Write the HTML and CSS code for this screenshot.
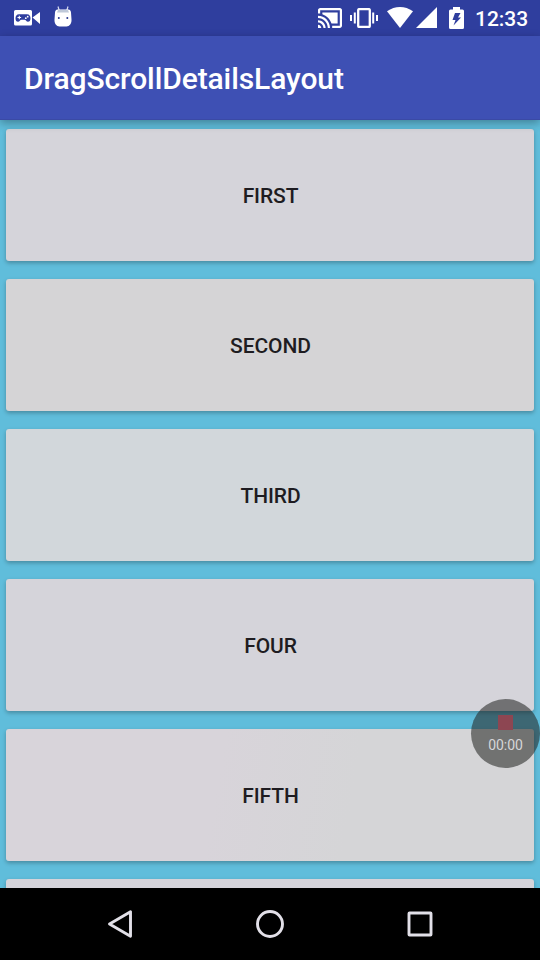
FILE: index.html
```html
<!DOCTYPE html>
<html lang="en">
<head>
<meta charset="utf-8">
<title>DragScrollDetailsLayout</title>
<link rel="stylesheet" href="styles.css">
</head>
<body>
<div class="screen">
  <header class="status">
    <div class="status-left">
      <svg class="icon-camera" width="26" height="16" viewBox="0 0 26 16">
        <path fill="#fff" d="M1.500 0H16.500a1.500 1.500 0 0 1 1.500 1.500V14a1.500 1.500 0 0 1-1.500 1.500H1.500A1.500 1.500 0 0 1 0 14V1.500A1.500 1.500 0 0 1 1.500 0ZM18.500 7.500L26 2V14Z"/>
        <path fill="#2f3e9e" d="M5 4.300h8c2.300 0 3.500 1.700 3.500 4 0 2.500-1 3.500-2.500 3.500-1.700 0-2-2-3.500-2h-3c-1.500 0-1.800 2-3.500 2-1.500 0-2.500-1-2.500-3.500 0-2.300 1.200-4 3.500-4Z"/>
        <path stroke="#fff" stroke-width="1.100" d="M3.500 7.500h3.600M5.300 5.700v3.600"/>
        <circle cx="11.800" cy="8.200" r=".9" fill="#fff"/><circle cx="13.700" cy="6.700" r=".9" fill="#fff"/>
      </svg>
      <svg class="icon-droid" width="18" height="21" viewBox="0 0 18 21">
        <path stroke="#d8dcf0" stroke-width="1.200" d="M4 .5l1.200 4M14 .5l-1.200 4"/>
        <path fill="#fff" d="M3.500 3.500h11c1.500 0 2.500 1.500 2.500 3l.5 7c.3 4-2 7-5 7h-7c-3 0-5.300-3-5-7l.5-7c0-1.500 1-3 2.500-3Z"/>
        <path fill="#bfc9d9" d="M4 4h10l1 2.500H3Z"/>
        <circle cx="4.800" cy="12" r="1" fill="#26358c"/><circle cx="13.300" cy="12" r="1" fill="#26358c"/>
      </svg>
      
    </div>
    <div class="status-right">
      <svg class="icon-cast" width="24" height="20" viewBox="1 3 22 18" preserveAspectRatio="none">
        <path fill="#fff" d="M1 18v3h3c0-1.660-1.340-3-3-3zm0-4v2c2.760 0 5 2.240 5 5h2c0-3.870-3.130-7-7-7zm18-7H5v1.630c3.960 1.280 7.090 4.410 8.370 8.370H19V7zM1 10v2c4.970 0 9 4.030 9 9h2c0-6.080-4.930-11-11-11zm20-7H3c-1.100 0-2 .9-2 2v3h2V5h18v14h-7v2h7c1.100 0 2-.9 2-2V5c0-1.100-.9-2-2-2z"/>
      </svg>
      <svg class="icon-vibrate" width="28" height="20" viewBox="0 0 28 20" fill="none" stroke="#fff" stroke-width="2">
        <rect x="8.200" y="1.100" width="11.600" height="17.800" rx="1" stroke-width="2.300"/>
        <path d="M1 7v6M4.800 4.500v11M27 7v6M23.200 4.500v11"/>
      </svg>
      <svg class="icon-wifi" width="26" height="21" viewBox="0 0 26 21"><path fill="#fff" d="M0 4.300C8 -1.400 18 -1.400 26 4.300L13 21Z"/></svg>
      <svg class="icon-signal" width="21" height="21" viewBox="0 0 21 21"><path fill="#fff" d="M21 0V21H0Z"/></svg>
      <svg class="icon-battery" width="15" height="22" viewBox="0 0 15 22">
        <path fill="#fff" d="M4 0h7v2.500h2.500A1.500 1.500 0 0 1 15 4v16.500a1.500 1.500 0 0 1-1.500 1.500h-12A1.500 1.500 0 0 1 0 20.500V4a1.500 1.500 0 0 1 1.500-1.500H4Z"/>
        <path fill="#2f3e9e" d="M6 6h5.500L9 10.500H12L4.500 18.500L6.500 13H3.500Z"/>
      </svg>
      <span class="clock">12:33</span>
    </div>
  </header>
  <div class="toolbar"><h1>DragScrollDetailsLayout</h1></div>
  <main class="list">
    <button class="item tone-a">FIRST</button>
    <button class="item tone-b">SECOND</button>
    <button class="item tone-c">THIRD</button>
    <button class="item tone-a">FOUR</button>
    <button class="item tone-d">FIFTH</button>
    <button class="item tone-a"></button>
  </main>
  <nav class="navbar">
    <svg width="30" height="30" viewBox="0 0 30 30"><path d="M4.500 15L25.500 2.700V27.300Z"/></svg>
    <svg width="30" height="30" viewBox="0 0 30 30"><circle cx="15" cy="15" r="12.500"/></svg>
    <svg width="30" height="30" viewBox="0 0 30 30"><rect x="4" y="4" width="22" height="22" rx=".5"/></svg>
  </nav>
  <div class="recorder"><i class="stop"></i><span>00:00</span></div>
</div>
</body>
</html>
```
FILE: styles.css
```css
* { box-sizing: border-box; }
body { margin: 0; font-family: Roboto, "Liberation Sans", sans-serif; }
svg { display: block; flex: none; }
.screen {
  position: relative;
  display: flex;
  flex-direction: column;
  width: 540px;
  height: 960px;
  overflow: hidden;
  background: #60bddb;
}
.status {
  display: flex;
  justify-content: space-between;
  flex: none;
  height: 36px;
  padding: 0 12px 0 14px;
  background: #2f3e9e;
}
.status-left, .status-right { display: flex; align-items: flex-start; }
.icon-camera { margin-top: 10px; }
.icon-droid { margin: 6px 0 0 14px; }
.icon-cast { margin-top: 8px; }
.icon-vibrate { margin: 8px 0 0 8px; }
.icon-wifi { margin: 7px 0 0 9px; }
.icon-signal { margin: 7px 0 0 3px; }
.icon-battery { margin: 7px 0 0 12px; }
.clock {
  width: 53px;
  margin-left: 11px;
  color: #fff;
  font-size: 21px;
  font-weight: 500;
  line-height: 38px;
  letter-spacing: -.05px;
  white-space: nowrap;
}
.toolbar {
  position: relative;
  display: flex;
  align-items: center;
  flex: none;
  height: 84px;
  padding: 2px 24px 0;
  background: #3e50b4;
  border-bottom: 1px solid #3a4aa5;
  box-shadow: 0 3px 9px rgba(0, 0, 0, .32);
}
.toolbar h1 {
  margin: 0;
  color: #fff;
  font-size: 30px;
  font-weight: 500;
  line-height: 36px;
  letter-spacing: -.1px;
}
.list {
  display: flex;
  flex-direction: column;
  flex: 1;
  min-height: 0;
  gap: 18px;
  padding: 9px 6px 0;
  overflow: hidden;
}
.item {
  flex: none;
  height: 132px;
  padding: 2px 0 0 1px;
  border: 0;
  border-radius: 3px;
  box-shadow: 0 2px 4px rgba(0, 0, 0, .27);
  color: #1e1c21;
  font: 500 21px Roboto, "Liberation Sans", sans-serif;
  letter-spacing: -.1px;
}
.tone-a { background: #d5d4da; }
.tone-b { background: #d5d4d6; }
.tone-c { background: #d2d7db; }
.tone-d { background: linear-gradient(100deg, #d8d4da 40%, #d5d5d7 65%); }
.navbar {
  display: flex;
  justify-content: center;
  align-items: center;
  flex: none;
  gap: 120px;
  height: 72px;
  background: #000;
}
.navbar svg { fill: none; stroke: #e2e0e8; stroke-width: 2.900; stroke-linejoin: round; }
.recorder {
  position: absolute;
  top: 699px;
  left: 471px;
  display: flex;
  flex-direction: column;
  align-items: center;
  width: 69px;
  height: 69px;
  padding-top: 16px;
  border-radius: 50%;
  background: rgba(34, 36, 34, .56);
  color: #d6d6d8;
  font-size: 14px;
  line-height: 16px;
  letter-spacing: -.1px;
}
.stop { width: 15px; height: 15px; margin-bottom: 7px; background: #8d4652; }
```
